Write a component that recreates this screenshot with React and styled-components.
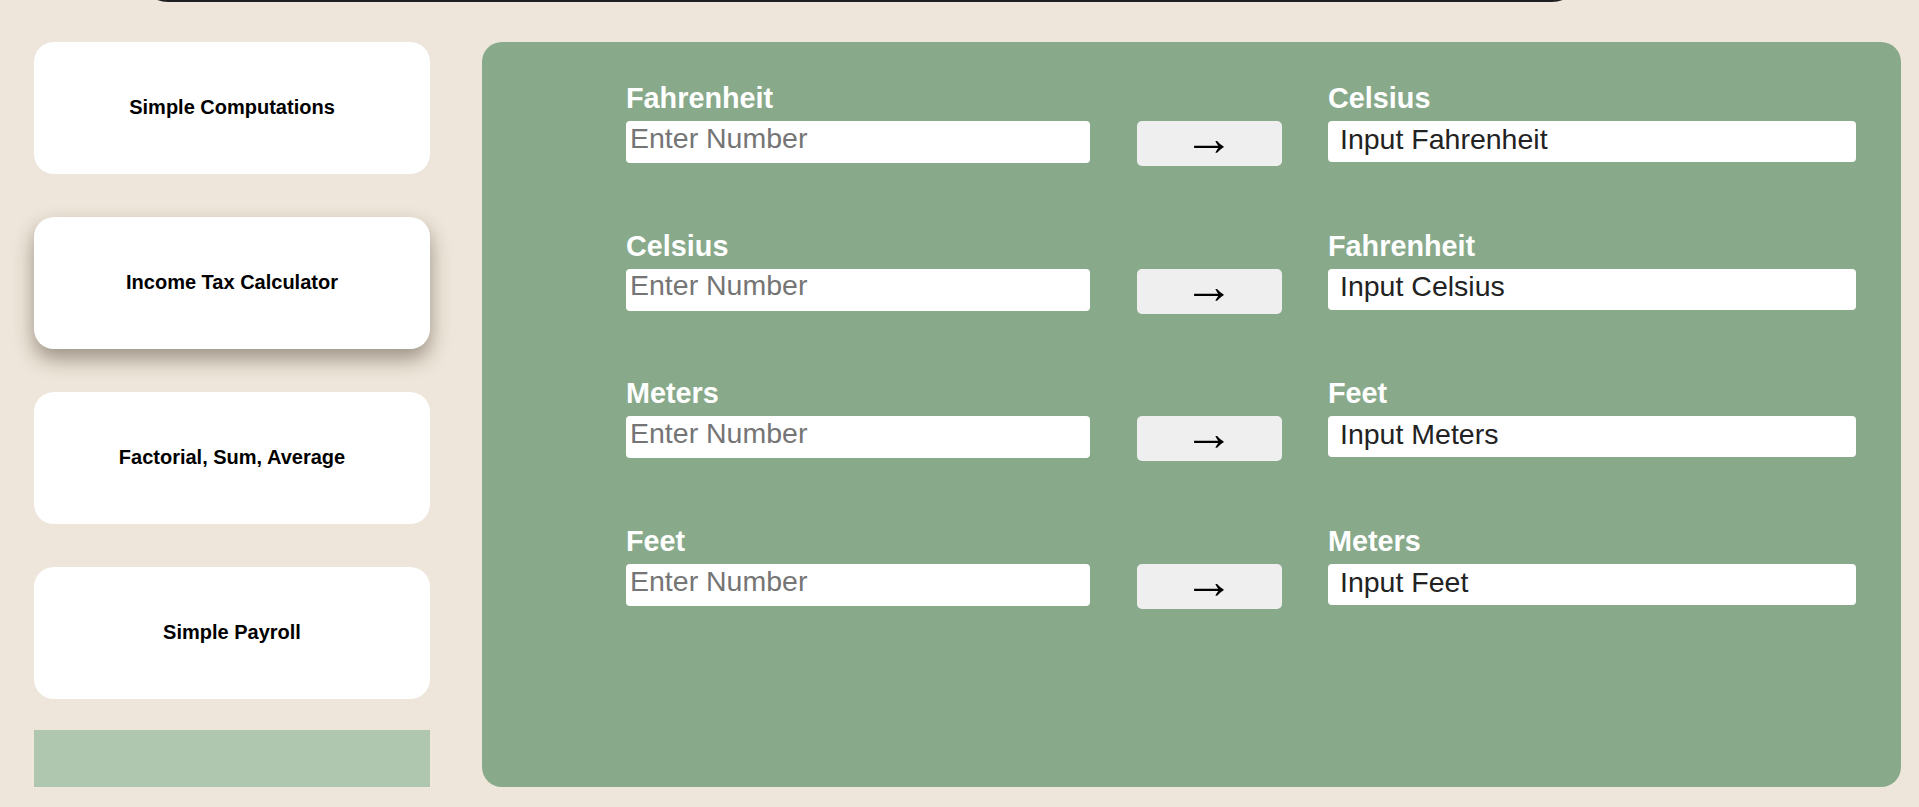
import React from "react";
import styled, { createGlobalStyle } from "styled-components";

const GlobalStyle = createGlobalStyle`
  html, body {
    margin: 0;
    padding: 0;
    background: #eee6da;
    font-family: "Liberation Sans", Arial, sans-serif;
    overflow: hidden;
  }
  * { box-sizing: border-box; }
`;

const Page = styled.div`
  min-height: 807px;
  background: #eee6da;
`;

const TopBar = styled.header`
  height: 60px;
  width: 1444px;
  margin: -58.5px 0 0 138px;
  background: #1e2023;
  border-radius: 0 0 30px 30px;
`;

const Layout = styled.main`
  display: flex;
  gap: 52px;
  padding: 40.5px 18px 20px 34px;
`;

const Sidebar = styled.nav`
  width: 396px;
  display: flex;
  flex-direction: column;
  gap: 31px;
`;

const CardList = styled.div`
  display: flex;
  flex-direction: column;
  gap: 43px;
`;

const NavCard = styled.div`
  height: 132px;
  background: #ffffff;
  border-radius: 20px;
  display: flex;
  align-items: center;
  justify-content: center;
  font-size: 20px;
  font-weight: 700;
  color: #000;
  padding-bottom: 2px;
  box-shadow: ${(p) => (p.$active ? "0 10px 20px rgba(60, 45, 30, 0.45)" : "none")};
`;

const SideFill = styled.div`
  height: 57px;
  background: #afc7ae;
`;

const Panel = styled.section`
  flex: 1;
  height: 745px;
  background: #88aa8b;
  border-radius: 20px;
  padding: 40px 45px 0 144px;
  display: flex;
  flex-direction: column;
  gap: 63.7px;
`;

const Converter = styled.div`
  display: grid;
  grid-template-columns: 464px 145px 1fr;
  column-gap: 46.5px;
  row-gap: 6px;
  align-items: start;
`;

const Label = styled.div`
  font-size: 28.8px;
  line-height: 33px;
  font-weight: 700;
  color: #ffffff;
  grid-column: ${(p) => p.$col};
`;

const NumberInput = styled.input`
  height: 42px;
  width: 100%;
  border: none;
  border-radius: 4px;
  padding: 1px 3px 9px 4px;
  background: #fff;
  font-family: "Liberation Sans", Arial, sans-serif;
  font-size: 28.5px;
  color: #222;
  outline: none;
  &::placeholder {
    color: #757575;
  }
`;

const ConvertButton = styled.button`
  width: 145px;
  height: 45px;
  border: none;
  border-radius: 5px;
  background: #efefef;
  color: #000;
  font-family: "Liberation Sans", Arial, sans-serif;
  font-size: 50px;
  line-height: 20px;
  padding: 0 0 11px 0;
  overflow: visible;
  cursor: pointer;
`;

const Output = styled.div`
  height: 41px;
  background: #fff;
  border-radius: 4px;
  padding: 1.5px 12px 0 12px;
  font-size: 28.5px;
  line-height: 33px;
  color: #222;
`;

const sideItems = [
  "Simple Computations",
  "Income Tax Calculator",
  "Factorial, Sum, Average",
  "Simple Payroll",
];

const conversions = [
  { from: "Fahrenheit", to: "Celsius", out: "Input Fahrenheit" },
  { from: "Celsius", to: "Fahrenheit", out: "Input Celsius" },
  { from: "Meters", to: "Feet", out: "Input Meters" },
  { from: "Feet", to: "Meters", out: "Input Feet" },
];

export default function App() {
  return (
    <Page>
      <GlobalStyle />
      <TopBar />
      <Layout>
        <Sidebar>
          <CardList>
            {sideItems.map((t, i) => (
              <NavCard key={t} $active={i === 1}>
                {t}
              </NavCard>
            ))}
          </CardList>
          <SideFill />
        </Sidebar>
        <Panel>
          {conversions.map((c) => (
            <Converter key={c.from + c.to}>
              <Label $col="1">{c.from}</Label>
              <Label $col="3">{c.to}</Label>
              <NumberInput type="text" placeholder="Enter Number" />
              <ConvertButton>→</ConvertButton>
              <Output>{c.out}</Output>
            </Converter>
          ))}
        </Panel>
      </Layout>
    </Page>
  );
}
